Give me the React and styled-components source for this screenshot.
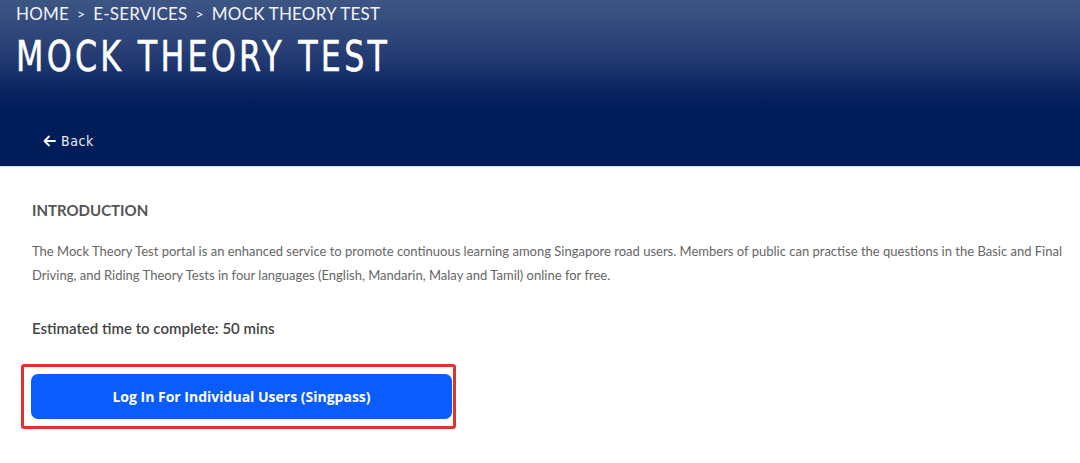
import * as React from "react";
import styled, { createGlobalStyle } from "styled-components";

const GlobalStyle = createGlobalStyle`
  html, body {
    margin: 0;
    padding: 0;
    background: #ffffff;
    font-family: Lato, "Open Sans", sans-serif;
  }
`;

const Banner = styled.header`
  height: 167px;
  box-sizing: border-box;
  padding: 4px 16px 0;
  display: flex;
  flex-direction: column;
  align-items: flex-start;
  background: linear-gradient(180deg, #3e5684 0%, #233b72 35%, #0a2460 55%, #001d5a 66%, #001d5a 100%);
  border-bottom: 1px solid #d3e1ee;
  color: #ffffff;
`;

const Crumbs = styled.nav`
  display: flex;
  align-items: center;
  gap: 8px;
  font-family: Lato, sans-serif;
  font-size: 17px;
  letter-spacing: 0.2px;
  line-height: 20px;
  color: #f2f4f8;
`;

const Separator = styled.span`
  font-size: 14px;
`;

const Title = styled.h1`
  margin: 8px 0 0;
  font-family: "DejaVu Sans Condensed", sans-serif;
  font-weight: 400;
  font-size: 43px;
  line-height: 48px;
  letter-spacing: 4px;
  color: #ffffff;
  -webkit-text-stroke: 0.5px #ffffff;
  transform: scaleX(0.82);
  transform-origin: left center;
  white-space: nowrap;
`;

const BackLink = styled.a`
  margin: 53px 0 0 27px;
  display: flex;
  align-items: center;
  gap: 5px;
  font-family: "DejaVu Sans Condensed", sans-serif;
  font-size: 14px;
  letter-spacing: 0.6px;
  color: #e8ecf4;
  text-decoration: none;
`;

const Content = styled.main`
  padding: 33px 10px 0 32px;
`;

const Heading = styled.h2`
  margin: 0;
  font-family: Lato, sans-serif;
  font-size: 15px;
  font-weight: 700;
  line-height: 20px;
  color: #555555;
`;

const Paragraph = styled.p`
  margin: 19px 0 0;
  font-family: Lato, sans-serif;
  font-size: 13px;
  line-height: 24px;
  color: #666666;
`;

const Estimate = styled.p`
  margin: 31px 0 0;
  font-family: Lato, sans-serif;
  font-size: 15px;
  font-weight: 600;
  line-height: 20px;
  color: #444444;
`;

const Highlight = styled.div`
  margin: 26px 0 0 -11px;
  width: 435px;
  box-sizing: border-box;
  padding: 7px 1px 7px 7px;
  border: 3px solid #e53030;
  border-radius: 3px;
`;

const LoginButton = styled.button`
  width: 100%;
  height: 45px;
  border: none;
  border-radius: 7px;
  background: #0a5cff;
  color: #ffffff;
  font-family: "Open Sans", Lato, sans-serif;
  font-size: 14px;
  font-weight: 700;
  cursor: pointer;
`;

const Arrow = () => (
  <svg width="13" height="12" viewBox="0 0 13 12" fill="none" stroke="#ffffff" strokeWidth="1.8" strokeLinecap="round" strokeLinejoin="round">
    <path d="M12 6H1.5M6 1.5L1.5 6L6 10.5" />
  </svg>
);

export default function App() {
  return (
    <>
      <GlobalStyle />
      <Banner>
        <Crumbs>
          <span>HOME</span>
          <Separator>&gt;</Separator>
          <span>E-SERVICES</span>
          <Separator>&gt;</Separator>
          <span>MOCK THEORY TEST</span>
        </Crumbs>
        <Title>MOCK THEORY TEST</Title>
        <BackLink href="#">
          <Arrow />
          Back
        </BackLink>
      </Banner>
      <Content>
        <Heading>INTRODUCTION</Heading>
        <Paragraph>
          The Mock Theory Test portal is an enhanced service to promote continuous learning among Singapore road users. Members of public can practise the questions in the Basic and Final Driving, and Riding Theory Tests in four languages (English, Mandarin, Malay and Tamil) online for free.
        </Paragraph>
        <Estimate>Estimated time to complete: 50 mins</Estimate>
        <Highlight>
          <LoginButton>Log In For Individual Users (Singpass)</LoginButton>
        </Highlight>
      </Content>
    </>
  );
}
